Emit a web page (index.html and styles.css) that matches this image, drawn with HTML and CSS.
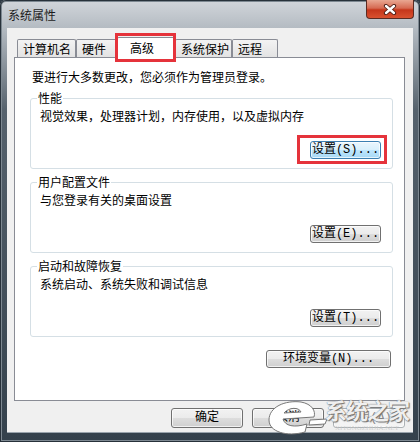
FILE: index.html
```html
<!DOCTYPE html>
<html lang="zh-CN">

<head>
  <meta charset="UTF-8">
  <title>系统属性</title>
  <link rel="stylesheet" href="styles.css">
</head>

<body>
  <div class="window">
    <div class="titlebar">
      <span class="title">系统属性</span>
      <span class="close">
        <svg width="14" height="11" viewBox="0 0 14 11">
          <path d="M3 2 L11 9 M11 2 L3 9" stroke="#4a1a12" stroke-width="4.2" stroke-linecap="round" />
          <path d="M3 2 L11 9 M11 2 L3 9" stroke="#fff" stroke-width="2.4" stroke-linecap="round" />
        </svg>
      </span>
    </div>

    <div class="client">
      <div class="tabs">
        <span class="tab t1">计算机名</span>
        <span class="tab t2">硬件</span>
        <span class="tab active mark">高级</span>
        <span class="tab t4">系统保护</span>
        <span class="tab t5">远程</span>
      </div>

      <div class="panel">
        <p class="intro">要进行大多数更改，您必须作为管理员登录。</p>

        <fieldset class="group">
          <legend>性能</legend>
          <p>视觉效果，处理器计划，内存使用，以及虚拟内存</p>
          <div class="actions"><button class="btn focus mark">设置(S)...</button></div>
        </fieldset>

        <fieldset class="group">
          <legend>用户配置文件</legend>
          <p>与您登录有关的桌面设置</p>
          <div class="actions"><button class="btn">设置(E)...</button></div>
        </fieldset>

        <fieldset class="group">
          <legend>启动和故障恢复</legend>
          <p>系统启动、系统失败和调试信息</p>
          <div class="actions"><button class="btn">设置(T)...</button></div>
        </fieldset>

        <div class="actions env"><button class="btn wide">环境变量(N)...</button></div>
      </div>

      <div class="footer">
        <button class="btn big">确定</button>
        <button class="btn big">取消</button>
        <button class="btn big" disabled>应用(A)</button>
      </div>

      <div class="watermark">
        <svg width="66" height="38" viewBox="0 0 66 38">
          <path d="M6 21 C6 8 22 1 38 3 C49 5 53 12 51 18 L20 20 C22 27 31 29 44 25 L42 33 C24 38 6 33 6 21 Z M21 14 L38 13 C36 8 26 8 21 14 Z" fill="#fff" stroke="#777" stroke-width="1" />
          <path d="M47 21 L64 20 L62 25 L46 26 Z" fill="#fff" stroke="#777" stroke-width="1" />
        </svg>
        <div class="brand">
          <span class="name">系统之家</span>
          <span class="url">XITONGZHIJIA.NET</span>
        </div>
      </div>
    </div>
  </div>
</body>

</html>
```

FILE: styles.css
```css
body,
html {
  margin: 0;
  padding: 0;
  font-family: "Noto Sans CJK SC", sans-serif;
  font-size: 12px;
  background-color: #2f3b46;
}

p {
  margin: 0;
}

.window {
  width: 420px;
  height: 442px;
  box-sizing: border-box;
  padding: 0 7px 10px 7px;
  border-radius: 6px 6px 0 0;
  background: linear-gradient(#d2d6db 0, #b4bbc2 28px, #56626d 110px, #34414c 100%);
  box-shadow: inset 0 0 0 1px #27313a, inset 0 0 0 2px #7d8891;
}

.titlebar {
  display: flex;
  align-items: flex-start;
  height: 28px;
}

.title {
  padding: 7px 0 0 1px;
  line-height: 16px;
  color: #1c1c1c;
}

.close {
  display: flex;
  align-items: center;
  justify-content: center;
  width: 46px;
  height: 18px;
  margin-left: auto;
  margin-right: -1px;
  border: 1px solid #5b2b22;
  border-top: none;
  border-radius: 0 0 4px 4px;
  background: linear-gradient(#e9a792 0, #d66a52 45%, #c5361b 55%, #d9512f 100%);
}

.client {
  position: relative;
  height: 404px;
  box-sizing: border-box;
  padding: 9px 8px 0 7px;
  background-color: #f0f0f0;
  box-shadow: 0 1px 0 #9aa4ad;
}

/* tabs */
.tabs {
  display: flex;
  align-items: flex-end;
  height: 20px;
  padding-left: 3px;
}

.tab {
  box-sizing: border-box;
  height: 18px;
  padding-left: 5px;
  line-height: 17px;
  border: 1px solid #898c95;
  border-bottom: none;
  border-radius: 2px 2px 0 0;
  background: linear-gradient(#f3f3f3, #e3e3e3);
  white-space: nowrap;
}

.tab.t1 { width: 59px; }
.tab.t2 { width: 41px; }
.tab.t4 { width: 57px; }
.tab.t5 { width: 46px; }

.tab.active {
  position: relative;
  z-index: 1;
  width: 58px;
  height: 21px;
  margin-bottom: -1px;
  padding-left: 12px;
  line-height: 19px;
  background: #fff;
}

/* red annotation boxes */
.mark::after {
  content: "";
  position: absolute;
  border: 3px solid #e5333b;
  pointer-events: none;
}

.tab.mark::after {
  top: -5px;
  left: -3px;
  right: -2px;
  bottom: -4px;
}

.btn.mark::after {
  top: -7px;
  left: -14px;
  right: -7px;
  bottom: -6px;
}

/* panel */
.panel {
  height: 344px;
  box-sizing: border-box;
  padding: 11px 11px 0 15px;
  border: 1px solid #898c95;
  background: #fff;
}

.intro {
  margin: 0 0 6px 2px;
  line-height: 16px;
}

.group {
  margin: 0 0 6px 0;
  min-width: 0;
  padding: 0 11px 9px 9px;
  border: 1px solid #d5dfe5;
  border-radius: 3px;
}

.group legend {
  margin-left: -3px;
  padding: 0 1px;
  line-height: 14px;
}

.group p {
  margin-top: 3px;
  line-height: 16px;
}

.actions {
  display: flex;
  justify-content: flex-end;
  margin-top: 17px;
}

.actions.env {
  margin: 13px 2px 0 0;
}

/* buttons */
.btn {
  position: relative;
  width: 71px;
  height: 18px;
  padding: 0;
  font-family: "Liberation Mono", "Noto Sans CJK SC", monospace;
  font-size: 12px;
  line-height: 16px;
  color: #000;
  border: 1px solid #707070;
  border-radius: 3px;
  background: linear-gradient(#f2f2f2 0, #ebebeb 50%, #dddddd 50%, #cfcfcf 100%);
  box-shadow: inset 0 0 0 1px rgba(255, 255, 255, .7);
}

.btn.focus {
  border-color: #3c7fb1;
  background: linear-gradient(#eaf6fd 0, #d9f0fc 50%, #bee6fd 50%, #a7d9f5 100%);
}

.btn.wide {
  width: 125px;
}

.btn.big {
  width: 72px;
  height: 20px;
}

.btn:disabled {
  color: #8a8a8a;
  border-color: #adb2b5;
  background: #f4f4f4;
}

.footer {
  display: flex;
  justify-content: flex-end;
  gap: 9px;
  margin-top: 7px;
}

/* watermark */
.watermark {
  position: absolute;
  right: 4px;
  bottom: -5px;
  display: flex;
  align-items: flex-start;
  pointer-events: none;
}

.watermark svg {
  margin-top: 2px;
}

.watermark .brand {
  display: flex;
  flex-direction: column;
  align-items: center;
  margin-left: -4px;
}

.watermark .name {
  font-size: 22px;
  line-height: 24px;
  font-weight: bold;
  letter-spacing: -1px;
  color: rgba(255, 255, 255, .92);
  text-shadow: 0 0 1px #555, 1px 1px 1px #777;
}

.watermark .url {
  margin-top: 3px;
  font-family: "Liberation Serif", serif;
  font-size: 7px;
  line-height: 8px;
  color: rgba(200, 200, 200, .8);
}
```
